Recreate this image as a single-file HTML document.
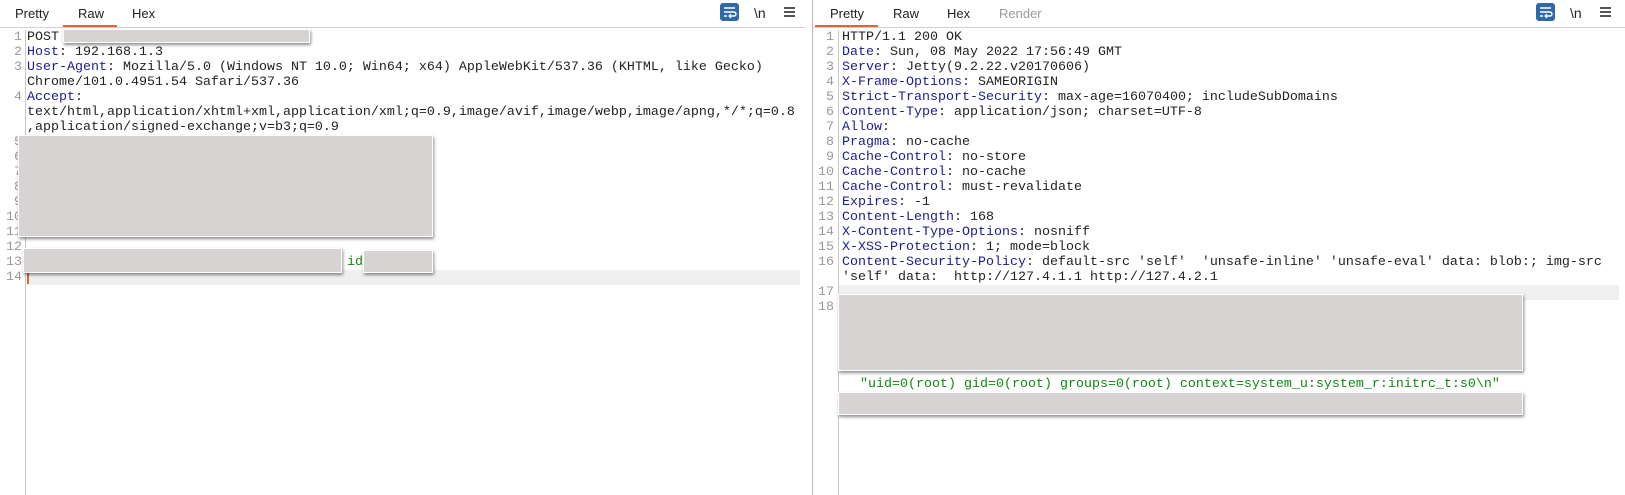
<!DOCTYPE html>
<html><head><meta charset="utf-8"><style>
*{margin:0;padding:0;box-sizing:border-box}
body{width:1625px;height:495px;background:#fff;position:relative;overflow:hidden;font-family:"Liberation Sans",sans-serif}
.tab{position:absolute;top:6px;font-size:13px;color:#222}
.ul{position:absolute;top:25px;height:2px;background:#e8622c}
.hr{position:absolute;top:27px;height:1px;background:#d0d0d0}
.vl{position:absolute;width:1px;background:#c8c8c8}
.ln{position:absolute;font-family:"Liberation Mono",monospace;font-size:13.33px;line-height:15px;white-space:pre;color:#222}
.n{position:absolute;font-family:"Liberation Mono",monospace;font-size:13.33px;line-height:15px;color:#999;text-align:right;width:20px}
.k{color:#1c1c8e}
.g{color:#118811}
.r{position:absolute;background:#d8d3d3;border:1px solid #fff;box-shadow:1px 2px 3px rgba(0,0,0,.45)}
.ic{position:absolute;top:3px;width:19px;height:18px;background:#2d6aa6;border-radius:3px}
.bs{position:absolute;top:5px;font-size:14px;color:#222}
.hm{position:absolute;top:7px;width:11px;height:10px;border-top:2px solid #555;border-bottom:2px solid #555}
.hm:after{content:"";position:absolute;left:0;right:0;top:2px;height:2px;background:#555}
</style></head><body>
<div class="tab" style="left:15px">Pretty</div>
<div class="tab" style="left:78px">Raw</div>
<div class="tab" style="left:132px">Hex</div>
<div class="ul" style="left:63px;width:54px"></div>
<div class="hr" style="left:0;width:805px"></div>
<div class="ic" style="left:720px"><svg width="19" height="18" viewBox="0 0 19 18"><path d="M4 5h11M4 9h10a2 2 0 0 1 0 4h-4M4 13h3" stroke="#fff" stroke-width="1.4" fill="none"/><path d="M11 11l-2 2 2 2" stroke="#fff" stroke-width="1.2" fill="none"/></svg></div>
<div class="bs" style="left:754px">\n</div>
<div class="hm" style="left:784px"></div>
<div class="vl" style="left:25px;top:30px;height:465px"></div>
<div class="vl" style="left:812px;top:0;height:495px;background:#bbb"></div>
<div style="position:absolute;left:27px;top:270px;width:773px;height:15px;background:#f0f0f0"></div>
<div style="position:absolute;left:27px;top:271px;width:2px;height:13px;background:#e8622c"></div>

<div class="n" style="left:2px;top:30px">1<br>2<br>3<br><br>4<br><br><br>5<br>6<br>7<br>8<br>9<br>10<br>11<br>12<br>13<br>14</div>
<div class="ln" style="left:27px;top:30px">POST
<span class="k">Host</span>: 192.168.1.3
<span class="k">User-Agent</span>: Mozilla/5.0 (Windows NT 10.0; Win64; x64) AppleWebKit/537.36 (KHTML, like Gecko)
Chrome/101.0.4951.54 Safari/537.36
<span class="k">Accept</span>:
text/html,application/xhtml+xml,application/xml;q=0.9,image/avif,image/webp,image/apng,*/*;q=0.8
,application/signed-exchange;v=b3;q=0.9</div>
<div class="ln g" style="left:347px;top:255px">id</div>
<div class="r" style="left:63px;top:29px;width:247px;height:14px"></div>
<div class="r" style="left:18px;top:135px;width:415px;height:102px"></div>
<div class="r" style="left:23px;top:248px;width:319px;height:25px"></div>
<div class="r" style="left:363px;top:250px;width:70px;height:23px"></div>

<div class="tab" style="left:830px">Pretty</div>
<div class="tab" style="left:893px">Raw</div>
<div class="tab" style="left:947px">Hex</div>
<div class="tab" style="left:999px;color:#999">Render</div>
<div class="ul" style="left:815px;width:63px"></div>
<div class="hr" style="left:813px;width:812px"></div>
<div class="ic" style="left:1536px"><svg width="19" height="18" viewBox="0 0 19 18"><path d="M4 5h11M4 9h10a2 2 0 0 1 0 4h-4M4 13h3" stroke="#fff" stroke-width="1.4" fill="none"/><path d="M11 11l-2 2 2 2" stroke="#fff" stroke-width="1.2" fill="none"/></svg></div>
<div class="bs" style="left:1570px">\n</div>
<div class="hm" style="left:1600px"></div>
<div class="vl" style="left:838px;top:30px;height:465px"></div>
<div style="position:absolute;left:839px;top:285px;width:780px;height:15px;background:#f0f0f0"></div>

<div class="n" style="left:814px;top:30px">1<br>2<br>3<br>4<br>5<br>6<br>7<br>8<br>9<br>10<br>11<br>12<br>13<br>14<br>15<br>16<br><br>17<br>18</div>
<div class="ln" style="left:842px;top:30px">HTTP/1.1 200 OK
<span class="k">Date</span>: Sun, 08 May 2022 17:56:49 GMT
<span class="k">Server</span>: Jetty(9.2.22.v20170606)
<span class="k">X-Frame-Options</span>: SAMEORIGIN
<span class="k">Strict-Transport-Security</span>: max-age=16070400; includeSubDomains
<span class="k">Content-Type</span>: application/json; charset=UTF-8
<span class="k">Allow</span>:
<span class="k">Pragma</span>: no-cache
<span class="k">Cache-Control</span>: no-store
<span class="k">Cache-Control</span>: no-cache
<span class="k">Cache-Control</span>: must-revalidate
<span class="k">Expires</span>: -1
<span class="k">Content-Length</span>: 168
<span class="k">X-Content-Type-Options</span>: nosniff
<span class="k">X-XSS-Protection</span>: 1; mode=block
<span class="k">Content-Security-Policy</span>: default-src 'self'  'unsafe-inline' 'unsafe-eval' data: blob:; img-src
'self' data:  http://127.4.1.1 http://127.4.2.1</div>
<div class="ln g" style="left:844px;top:377px">  "uid=0(root) gid=0(root) groups=0(root) context=system_u:system_r:initrc_t:s0\n"</div>
<div class="r" style="left:838px;top:294px;width:685px;height:77px"></div>
<div class="r" style="left:838px;top:392px;width:685px;height:23px"></div>
</body></html>
